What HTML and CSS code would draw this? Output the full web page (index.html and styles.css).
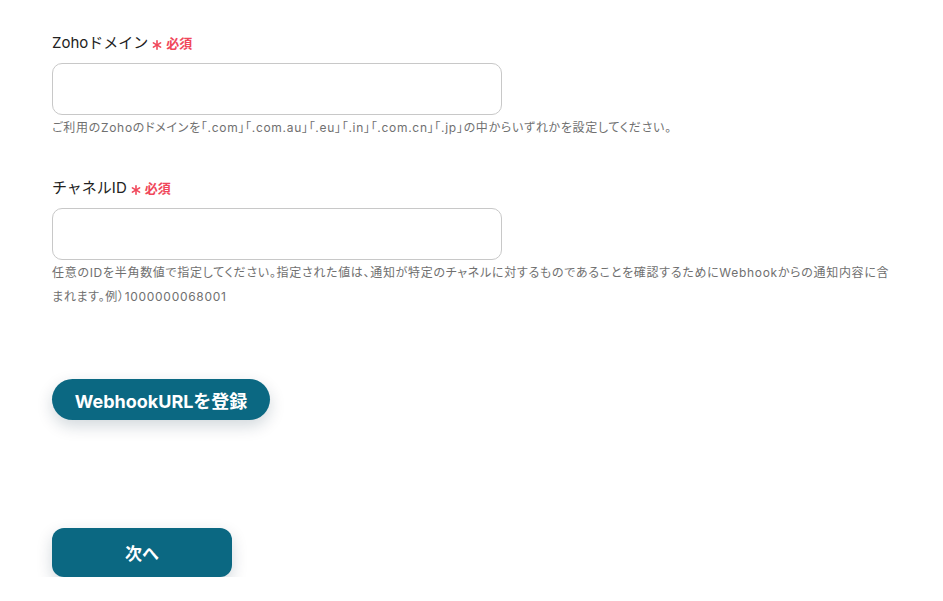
FILE: index.html
```html
<!DOCTYPE html>
<html lang="ja">
<head>
<meta charset="utf-8">
<link rel="stylesheet" href="styles.css">
</head>
<body>
<main class="form">
  <section class="field">
    <label class="label">Zohoドメイン<span class="req"><svg class="ast" viewBox="0 0 10 10" width="10" height="10"><g stroke="currentColor" stroke-width="1.6" stroke-linecap="round"><line x1="5" y1="0.8" x2="5" y2="9.2"/><line x1="1.4" y1="2.9" x2="8.6" y2="7.1"/><line x1="1.4" y1="7.1" x2="8.6" y2="2.9"/></g></svg>必須</span></label>
    <input class="input" type="text">
    <p class="help">ご利用のZohoのドメインを「.com」「.com.au」「.eu」「.in」「.com.cn」「.jp」の中からいずれかを設定してください。</p>
  </section>
  <section class="field field2">
    <label class="label">チャネルID<span class="req"><svg class="ast" viewBox="0 0 10 10" width="10" height="10"><g stroke="currentColor" stroke-width="1.6" stroke-linecap="round"><line x1="5" y1="0.8" x2="5" y2="9.2"/><line x1="1.4" y1="2.9" x2="8.6" y2="7.1"/><line x1="1.4" y1="7.1" x2="8.6" y2="2.9"/></g></svg>必須</span></label>
    <input class="input" type="text">
    <p class="help">任意のIDを半角数値で指定してください。指定された値は、通知が特定のチャネルに対するものであることを確認するためにWebhookからの通知内容に含まれます。例）1000000068001</p>
  </section>
  <div class="actions">
    <button class="btn-pill">WebhookURLを登録</button>
  </div>
  <div class="next">
    <button class="btn-next">次へ</button>
  </div>
</main>
</body>
</html>
```
FILE: styles.css
```css
* { box-sizing: border-box; }
html, body { margin: 0; padding: 0; background: #fff; }
body {
  font-family: "Inter", "Noto Sans CJK JP", sans-serif;
  color: #222;
}
.form {
  padding: 31px 0 0 52px;
  width: 900px;
}
.field { display: flex; flex-direction: column; }
.field2 { margin-top: 36px; }
.label {
  font-size: 15px;
  line-height: 24px;
  color: #222;
  display: flex;
  align-items: center;
}
.req {
  color: #f0475a;
  font-size: 13px;
  font-weight: 700;
  margin-left: 4px;
  display: inline-flex;
  align-items: center;
}
.ast {
  margin-right: 4px;
  position: relative;
  top: 2px;
}
.input {
  margin-top: 8px;
  width: 450px;
  height: 52px;
  border: 1px solid #c8c8c8;
  border-radius: 10px;
  background: #fff;
  outline: none;
}
.help {
  margin: 1px 0 0;
  font-size: 12px;
  line-height: 24px;
  color: #707070;
  width: 845px;
  letter-spacing: 0.7px;
  font-feature-settings: "palt";
}
.actions { margin-top: 70px; }
.btn-pill {
  width: 218px;
  height: 41px;
  border: 0;
  border-radius: 21px;
  background: #0b6882;
  color: #fff;
  font-family: inherit;
  font-size: 18px;
  font-weight: 700;
  box-shadow: 0 6px 16px rgba(0, 40, 60, 0.18);
}
.next { margin-top: 108px; }
.btn-next {
  width: 180px;
  height: 49px;
  border: 0;
  border-radius: 12px;
  background: #0b6882;
  color: #fff;
  font-family: inherit;
  font-size: 17px;
  font-weight: 700;
  box-shadow: 0 6px 16px rgba(0, 40, 60, 0.18);
}
```
